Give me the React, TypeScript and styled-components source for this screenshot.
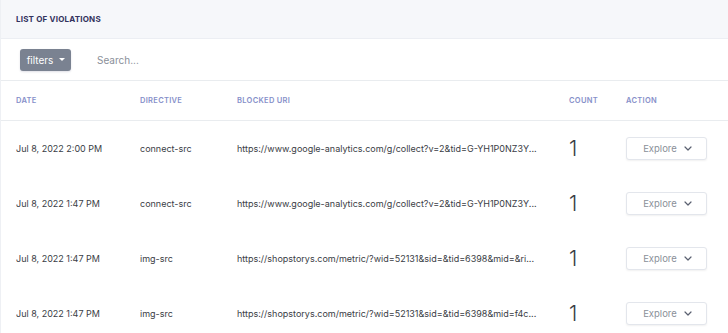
import styled, { createGlobalStyle } from 'styled-components';

const GlobalStyle = createGlobalStyle`
    html, body {
        margin: 0;
        padding: 0;
        background: #fff;
    }
    body {
        font-family: Inter, "Noto Sans", sans-serif;
        -webkit-font-smoothing: antialiased;
    }
`;

const Card = styled.div`
    width: 740px;
    height: 333px;
    overflow: hidden;
    border-left: 1px solid #eef0f4;
    background: #fff;
`;

const CardHeader = styled.div`
    height: 38px;
    padding: 0 15px;
    display: flex;
    align-items: center;
    background-color: #f6f7fa;
    border-bottom: 1px solid #eceef3;
    font-size: 8px;
    font-weight: 700;
    letter-spacing: 0.2px;
    color: #32325d;
    text-transform: uppercase;
`;

const FilterBar = styled.div`
    height: 41px;
    padding: 0 19px;
    display: flex;
    align-items: center;
    gap: 26px;
    border-bottom: 1px solid #e9ecef;
`;

const FilterButton = styled.button`
    height: 22px;
    width: 51px;
    padding: 0 0 0 1px;
    border: none;
    border-radius: 3px;
    background-color: #7a8291;
    box-shadow: 0 1px 2px rgba(50, 50, 93, 0.15);
    color: #fff;
    font-family: inherit;
    font-size: 10px;
    font-weight: 400;
    display: flex;
    align-items: center;
    justify-content: center;
    gap: 6px;

    > .caret {
        width: 0;
        height: 0;
        border-left: 3px solid transparent;
        border-right: 3px solid transparent;
        border-top: 3px solid #fff;
    }
`;

const SearchInput = styled.input`
    border: none;
    outline: none;
    width: 300px;
    padding: 0;
    font-family: inherit;
    font-size: 10px;
    color: #525f7f;

    &::placeholder {
        color: #8a8f99;
    }
`;

const Row = styled.div<{ $head?: boolean }>`
    display: grid;
    grid-template-columns: 124px 97px 332px 57px 1fr;
    align-items: center;
    padding-left: 15px;
    height: ${(p) => (p.$head ? '39px' : '55px')};
    border-bottom: ${(p) => (p.$head ? '1px solid #e9ecef' : 'none')};
`;

const HeadCell = styled.div`
    font-size: 7.5px;
    font-weight: 600;
    letter-spacing: 0.3px;
    text-transform: uppercase;
    color: #868fc9;
`;

const Cell = styled.div`
    font-size: 9px;
    color: #3a3d45;
    white-space: nowrap;
    overflow: hidden;
`;

const Count = styled.div`
    font-size: 21px;
    font-weight: 300;
    color: #3a3d45;
`;

const ExploreButton = styled.button`
    width: 81px;
    height: 23px;
    border: 1px solid #e3e6ec;
    border-radius: 3px;
    background: #fff;
    box-shadow: 0 1px 2px rgba(0, 0, 0, 0.06);
    font-family: inherit;
    font-size: 9.5px;
    color: #8a8f99;
    display: flex;
    align-items: center;
    justify-content: center;
    gap: 7px;
    padding: 0 0 0 2px;
`;

type Violation = {
    date: string,
    directive: string,
    uri: string,
    count: number
}

const violations: Violation[] = [
    { date: 'Jul 8, 2022 2:00 PM', directive: 'connect-src', uri: 'https://www.google-analytics.com/g/collect?v=2&tid=G-YH1P0NZ3Y...', count: 1 },
    { date: 'Jul 8, 2022 1:47 PM', directive: 'connect-src', uri: 'https://www.google-analytics.com/g/collect?v=2&tid=G-YH1P0NZ3Y...', count: 1 },
    { date: 'Jul 8, 2022 1:47 PM', directive: 'img-src', uri: 'https://shopstorys.com/metric/?wid=52131&sid=&tid=6398&mid=&ri...', count: 1 },
    { date: 'Jul 8, 2022 1:47 PM', directive: 'img-src', uri: 'https://shopstorys.com/metric/?wid=52131&sid=&tid=6398&mid=f4c...', count: 1 },
];

const Chevron = () => (
    <svg width="8" height="5" viewBox="0 0 8 5" fill="none">
        <path d="M1 1l3 3 3-3" stroke="#5a6070" strokeWidth="1.2" strokeLinecap="round" strokeLinejoin="round" />
    </svg>
);

const App = () => (
    <>
        <GlobalStyle />
        <Card>
            <CardHeader>List of violations</CardHeader>
            <FilterBar>
                <FilterButton type="button">
                    filters
                    <span className="caret" />
                </FilterButton>
                <SearchInput placeholder="Search..." />
            </FilterBar>
            <Row $head>
                <HeadCell>Date</HeadCell>
                <HeadCell>Directive</HeadCell>
                <HeadCell>Blocked URI</HeadCell>
                <HeadCell>Count</HeadCell>
                <HeadCell>Action</HeadCell>
            </Row>
            {violations.map((v, index) => (
                <Row key={index}>
                    <Cell>{v.date}</Cell>
                    <Cell>{v.directive}</Cell>
                    <Cell>{v.uri}</Cell>
                    <Count>{v.count}</Count>
                    <div>
                        <ExploreButton type="button">
                            Explore
                            <Chevron />
                        </ExploreButton>
                    </div>
                </Row>
            ))}
        </Card>
    </>
);

export default App;
